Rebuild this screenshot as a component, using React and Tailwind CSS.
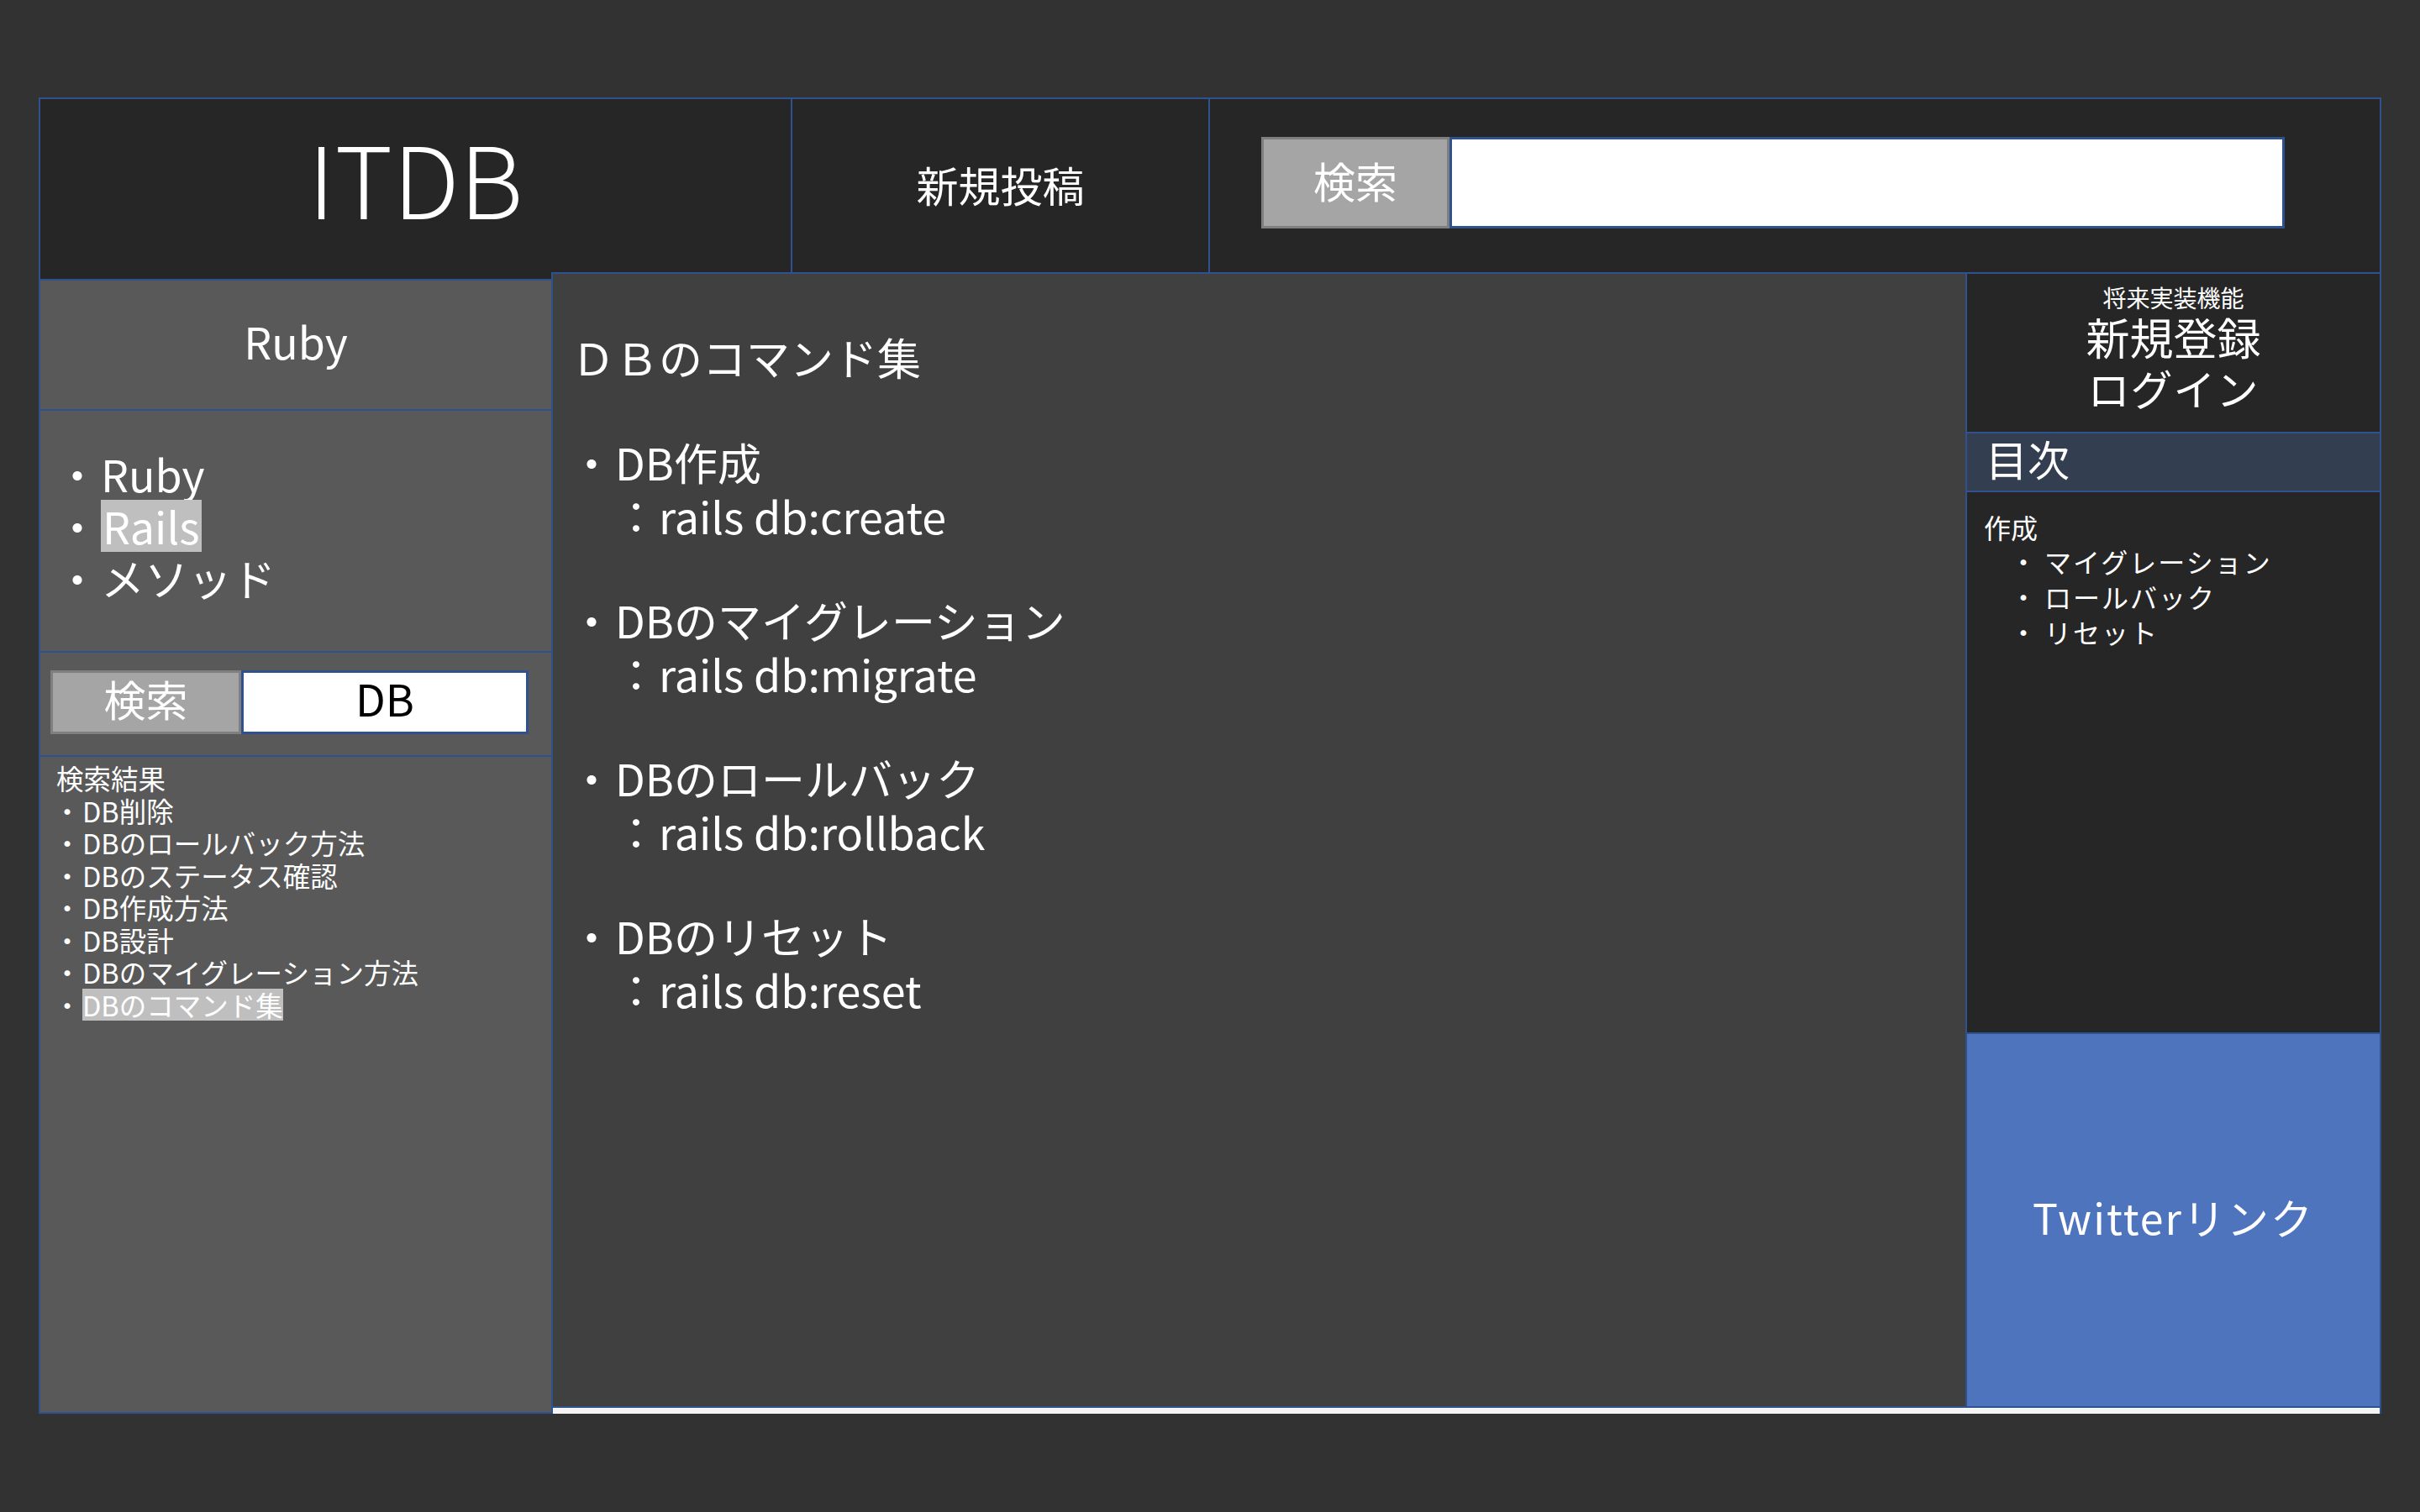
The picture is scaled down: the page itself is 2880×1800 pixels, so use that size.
const commands = [
  { title: "DB作成", cmd: "rails db:create" },
  { title: "DBのマイグレーション", cmd: "rails db:migrate" },
  { title: "DBのロールバック", cmd: "rails db:rollback" },
  { title: "DBのリセット", cmd: "rails db:reset" },
];

const results = [
  "DB削除",
  "DBのロールバック方法",
  "DBのステータス確認",
  "DB作成方法",
  "DB設計",
  "DBのマイグレーション方法",
];

const toc = ["マイグレーション", "ロールバック", "リセット"];

export default function App() {
  return (
    <div className="min-h-screen w-full bg-[#323232] pt-[116px] pl-[46px] text-white font-['Noto_Sans_CJK_JP','Noto_Sans',sans-serif]">
      <div className="w-[2788px] h-[1567px] flex flex-col border-t-2 border-x-2 border-[#2f528f]">
        {/* header */}
        <div className="flex h-[206px] bg-[#262626]">
          <div className="w-[895px] border-r-2 border-[#2f528f] flex items-center justify-center">
            <span className="text-[118px] font-light leading-none pb-[22px]">ITDB</span>
          </div>
          <div className="w-[497px] border-r-2 border-[#2f528f] flex items-center justify-center">
            <span className="text-[50px] leading-none pb-[4px]">新規投稿</span>
          </div>
          <div className="flex-1 flex pl-[61px] pt-[45px]">
            <div className="w-[224px] h-[109px] bg-[#a5a5a5] border-[3px] border-[#7f7f7f] flex items-center justify-center text-[50px] leading-none pb-[8px]">
              検索
            </div>
            <div className="w-[994px] h-[109px] bg-white border-[3px] border-[#2f528f]" />
          </div>
        </div>

        {/* body */}
        <div className="flex h-[1359px]">
          {/* left sidebar */}
          <div className="w-[610px] border-r-2 border-[#2f528f] flex flex-col bg-[#595959]">
            <div className="h-[10px] bg-[#262626] border-b-2 border-[#2f528f]" />
            <div className="h-[155px] border-b-2 border-[#2f528f] flex items-center justify-center">
              <span className="text-[52px] leading-none pb-[10px]">Ruby</span>
            </div>
            <div className="h-[288px] border-b-2 border-[#2f528f] pt-[44px] pl-[16px] text-[52px] leading-[62px]">
              <div className="flex">
                <span className="w-[56px] text-center">・</span>
                <span>Ruby</span>
              </div>
              <div className="flex">
                <span className="w-[56px] text-center">・</span>
                <span className="bg-[#bfbfbf] px-[2px]">Rails</span>
              </div>
              <div className="flex">
                <span className="w-[56px] text-center">・</span>
                <span>メソッド</span>
              </div>
            </div>
            <div className="h-[124px] border-b-2 border-[#2f528f] flex pl-[12px] pt-[21px]">
              <div className="w-[227px] h-[76px] bg-[#a5a5a5] border-[3px] border-[#7f7f7f] flex items-center justify-center text-[50px] leading-none pb-[10px]">
                検索
              </div>
              <div className="w-[342px] h-[76px] bg-white border-[3px] border-[#2f528f] flex items-center justify-center text-[52px] leading-none text-black pb-[10px]">
                DB
              </div>
            </div>
            <div className="flex-1 border-b-2 border-[#2f528f] pt-[6px] pl-[14px] text-[32.5px] leading-[38.5px]">
              <div className="ml-[5px]">検索結果</div>
              {results.map((r) => (
                <div key={r} className="flex">
                  <span className="w-[36px] text-center">・</span>
                  <span>{r}</span>
                </div>
              ))}
              <div className="flex">
                <span className="w-[36px] text-center">・</span>
                <span className="bg-[#bfbfbf]">DBのコマンド集</span>
              </div>
            </div>
          </div>

          {/* main + right */}
          <div className="flex-1 flex flex-col border-t-2 border-[#2f528f]">
            <div className="flex-1 flex border-b-2 border-[#2f528f]">
              <div className="flex-1 bg-[#404040] pt-[69px]">
                <div className="pl-[22px] text-[52px] leading-[60px]">ＤＢのコマンド集</div>
                <div className="mt-[63px] pl-[18px] flex flex-col gap-[60px] text-[52px] leading-[64px]">
                  {commands.map((c) => (
                    <div key={c.cmd}>
                      <div className="flex">
                        <span className="w-[56px] text-center">・</span>
                        <span>{c.title}</span>
                      </div>
                      <div className="flex pl-[54px]">
                        <span className="w-[54px] text-center">：</span>
                        <span>{c.cmd}</span>
                      </div>
                    </div>
                  ))}
                </div>
              </div>

              {/* right sidebar */}
              <div className="w-[493px] border-l-2 border-[#2f528f] flex flex-col bg-[#262626]">
                <div className="h-[190px] border-b-2 border-[#2f528f] pt-[11px] flex flex-col items-center">
                  <div className="text-[28px] leading-[34px]">将来実装機能</div>
                  <div className="text-[52px] leading-[60px]">新規登録</div>
                  <div className="text-[50px] leading-[60px] tracking-[1px]">ログイン</div>
                </div>
                <div className="h-[70px] border-b-2 border-[#2f528f] bg-[#333f50] flex items-center pl-[22px]">
                  <span className="text-[50px] leading-none pb-[10px]">目次</span>
                </div>
                <div className="h-[645px] border-b-2 border-[#2f528f] pt-[21px] pl-[20px] text-[32px]">
                  <div className="leading-[40px]">作成</div>
                  {toc.map((t) => (
                    <div key={t} className="flex ml-[24px] leading-[42px] tracking-[2px]">
                      <span className="w-[48px] text-center">・</span>
                      <span>{t}</span>
                    </div>
                  ))}
                </div>
                <div className="flex-1 bg-[#4e74bd] flex items-center justify-center">
                  <span className="text-[50px] leading-none tracking-[2px] pb-[10px]">Twitterリンク</span>
                </div>
              </div>
            </div>
            <div className="h-[7px] bg-[#f4f4f4]" />
          </div>
        </div>
      </div>
    </div>
  );
}
